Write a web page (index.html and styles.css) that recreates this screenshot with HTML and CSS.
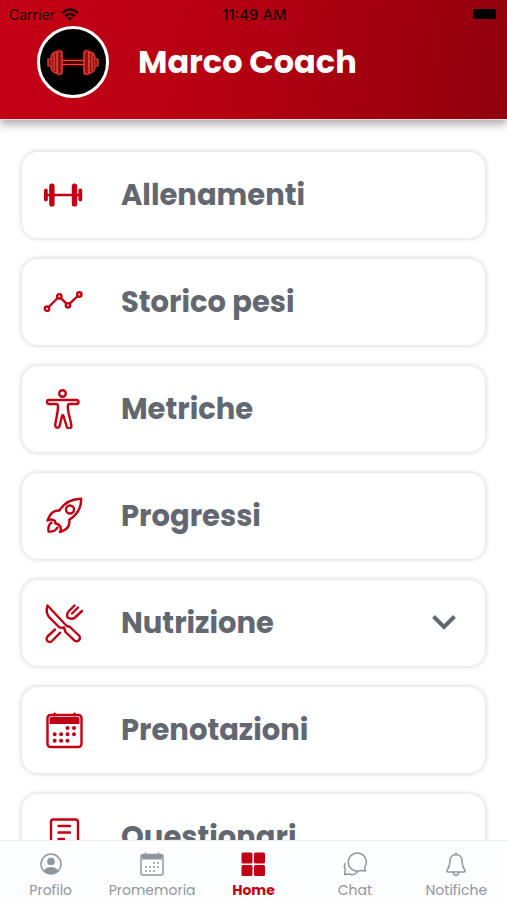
FILE: index.html
```html
<!DOCTYPE html>
<html lang="it">
<head>
<meta charset="utf-8">
<meta name="viewport" content="width=device-width, initial-scale=1">
<title>Marco Coach</title>
<link rel="stylesheet" href="styles.css">
</head>
<body>
<header class="header">
  <div class="status">
    <span class="carrier">Carrier
      <svg class="wifi" viewBox="0 0 18 13" aria-hidden="true"><g fill="none" stroke="currentColor" stroke-width="2.4"><path d="M1 5Q9-2 17 5"/><path d="M4 8.2Q9 3.8 14 8.2"/></g><path d="M6.2 10Q9 7.8 11.8 10L9 13Z" fill="currentColor"/></svg>
    </span>
    <time class="clock">11:49 AM</time>
    <svg class="battery" viewBox="0 0 28 12" aria-hidden="true"><rect x="1" y="1" width="23" height="10" rx="2"/><path d="M26 4q1.600 2 0 4z" opacity=".4"/></svg>
  </div>
  <div class="brand">
    <svg class="avatar" viewBox="0 0 72 72" aria-hidden="true">
      <circle cx="36" cy="36" r="34.500" fill="#000" stroke="#fff" stroke-width="3"/>
      <g fill="none" stroke="#c81414" stroke-width="4" opacity=".4"><path d="M25 34.500H47M25 38.500H47"/><rect x="19" y="25" width="5" height="23" rx="2"/><rect x="48" y="25" width="5" height="23" rx="2"/></g>
      <g fill="#8d1512" stroke="#f2443c" stroke-width="1.200"><path d="M25 34.500H47M25 38.500H47" fill="none"/><rect x="20" y="25" width="5" height="23" rx="2"/><rect x="47" y="25" width="5" height="23" rx="2"/><path d="M20 26Q15 26 14 31V42Q15 47 20 47ZM52 26Q57 26 58 31V42Q57 47 52 47Z"/><path d="M17 28V45M55 28V45M14 33H11V40H14M58 33H61V40H58"/></g>
    </svg>
    <h1 class="title">Marco Coach</h1>
  </div>
</header>

<main class="menu">
  <a class="card" href="#allenamenti">
    <svg class="icon" viewBox="0 0 40 40" aria-hidden="true"><path d="M2 20H38" stroke-width="2.400"/><g fill="currentColor" stroke="none"><rect x="1" y="13.500" width="3.800" height="13" rx="1.900"/><rect x="6.200" y="8.500" width="5.400" height="23" rx="2.600"/><rect x="28.800" y="8.500" width="5.400" height="23" rx="2.600"/><rect x="35.400" y="13.500" width="3.800" height="13" rx="1.900"/></g></svg>
    <span>Allenamenti</span>
  </a>
  <a class="card" href="#storico">
    <svg class="icon" viewBox="0 0 40 40" aria-hidden="true"><path d="M5.700 25L14.600 16M17.800 16.200L23.500 21.700M26.700 21.600L34.700 14"/><circle cx="4" cy="26.700" r="2.200"/><circle cx="16.300" cy="14.300" r="2.200"/><circle cx="25" cy="23.300" r="2.200"/><circle cx="36.300" cy="12.500" r="2.200"/></svg>
    <span>Storico pesi</span>
  </a>
  <a class="card" href="#metriche">
    <svg class="icon" viewBox="0 0 40 40" aria-hidden="true"><circle cx="19.500" cy="4.500" r="3.300"/><path d="M6 11H33.500A2 2 0 0 1 33.500 15H26.500Q24.800 15 24.800 17.500C24.800 25 28 31 28.300 36.500A2.300 2.300 0 0 1 23.700 37.500L20.500 27Q19.800 25.500 19 27L16.500 37.500A2.300 2.300 0 0 1 12.200 36.500C12.400 31 15 25 15 17.500Q15 15 13 15H6A2 2 0 0 1 6 11Z"/></svg>
    <span>Metriche</span>
  </a>
  <a class="card" href="#progressi">
    <svg class="icon" viewBox="0 0 40 40" aria-hidden="true"><path d="M38.200 2.800C29 2.800 22 6 16.300 14.500C10.500 14 7 17 4.500 24.500C7.500 22.800 10 23.500 12 25L12.500 27.500L15.500 28.500C18 30.500 18.500 33 17 36C24.500 34 27 29.500 26.300 23.800C35 18 38.500 11 38.200 2.800Z"/><circle cx="27" cy="13.500" r="4"/><path d="M8.500 26.500C5.500 28.500 5 31.500 5.500 35.500C9.500 36 12.500 35 14.500 31.500"/></svg>
    <span>Progressi</span>
  </a>
  <button class="card" type="button" aria-expanded="false">
    <svg class="icon" viewBox="0 0 40 40" aria-hidden="true"><path d="M4.500 2.500C2.500 8 4 12.500 8 16L16 24Q18 25.500 21 24.500L22.500 29L31 37.200A3 3 0 0 0 36 32.500L27 24L23.500 22.800Z"/><path d="M12 26.500L4.500 33.500A3 3 0 0 0 9 38L17 29.800M31.500 2.500L25.500 8.500Q23.500 10.500 24.500 14.500Q29 17 32 14.500L39 8M35 4.500L29 10.500"/></svg>
    <span>Nutrizione</span>
    <svg class="chevron" viewBox="0 0 24 24" aria-hidden="true"><path d="M1.500 5.500L12 16L22.500 5.500"/></svg>
  </button>
  <a class="card" href="#prenotazioni">
    <svg class="icon" viewBox="0 0 40 40" aria-hidden="true"><rect x="4.500" y="5" width="34" height="32" rx="3"/><path d="M6.500 8.500Q6.500 7 8 7H35Q36.500 7 36.500 8.500V14H6.500Z" fill="currentColor" stroke="none"/><path d="M11.500 4V5M31.500 4V5" stroke-width="3"/><path class="dots" d="M24.500 18H24.510M31 18H31.010M11.700 24.300H11.710M18.100 24.300H18.110M24.500 24.300H24.510M31 24.300H31.010M11.700 30.700H11.710M18.100 30.700H18.110M24.500 30.700H24.510"/></svg>
    <span>Prenotazioni</span>
  </a>
  <a class="card" href="#questionari">
    <svg class="icon" viewBox="0 0 40 40" aria-hidden="true"><path d="M8 38V5Q8 2.500 10.500 2.500H32.500Q35 2.500 35 5V38ZM15.500 9H27M15.500 15.500H27M15.500 22H21"/></svg>
    <span>Questionari</span>
  </a>
</main>

<nav class="tabs" aria-label="Principale">
  <a class="tab" href="#profilo">
    <svg viewBox="0 0 26 26" aria-hidden="true"><circle cx="13" cy="13" r="10"/><circle cx="13" cy="10.500" r="3.800" fill="currentColor" stroke="none"/><path d="M6 20Q7.500 16 13 16T20 20Q17 23 13 23T6 20Z" fill="currentColor" stroke="none"/></svg>
    <span>Profilo</span>
  </a>
  <a class="tab" href="#promemoria">
    <svg viewBox="0 0 26 26" aria-hidden="true"><rect x="2" y="3.500" width="22" height="20.500" rx="2"/><path d="M3 4H23V8.500H3Z" fill="currentColor" stroke="none"/><path d="M6.500 2V4M19.500 2V4"/><path class="dots-small" d="M15 12H15.010M19 12H19.010M7 16H7.010M11 16H11.010M15 16H15.010M19 16H19.010M7 20H7.010M11 20H11.010M15 20H15.010"/></svg>
    <span>Promemoria</span>
  </a>
  <a class="tab active" href="#home" aria-current="page">
    <svg viewBox="0 0 26 26" aria-hidden="true"><g fill="currentColor" stroke="none"><rect x="1.500" y="1.500" width="11" height="11" rx="1.500"/><rect x="14" y="1.500" width="11" height="11" rx="1.500"/><rect x="1.500" y="14" width="11" height="11" rx="1.500"/><rect x="14" y="14" width="11" height="11" rx="1.500"/></g></svg>
    <span>Home</span>
  </a>
  <a class="tab" href="#chat">
    <svg viewBox="0 0 26 26" aria-hidden="true"><path d="M23.500 20L22.500 16.500A9 9 0 1 0 18.500 19.500L23.500 20Z"/><path d="M3 12.500Q1.500 15.500 3.200 18.500L2.500 23.500L7 23Q11.500 25 15 21.500"/></svg>
    <span>Chat</span>
  </a>
  <a class="tab" href="#notifiche">
    <svg viewBox="0 0 26 26" aria-hidden="true"><path d="M13 2V4M13 3.500C9 3.500 7 6.500 7 10C7 15 5.500 17 4 19.500Q3.500 21 5 21H21Q22.500 21 22 19.500C20.500 17 19 15 19 10C19 6.500 17 3.500 13 3.500ZM10 21Q10.500 24.300 13 24.300T16 21"/></svg>
    <span>Notifiche</span>
  </a>
</nav>
</body>
</html>
```
FILE: styles.css
```css
* {
  box-sizing: border-box;
}

body {
  display: flex;
  flex-direction: column;
  height: 100vh;
  margin: 0;
  background: #fff;
  color: #636770;
  font-family: Poppins, Inter, "Open Sans", sans-serif;
}

a {
  color: inherit;
  text-decoration: none;
}

svg {
  flex: none;
}

.header {
  position: relative;
  flex: none;
  padding-bottom: 21px;
  border-bottom: 1px solid #f5dede;
  background: linear-gradient(100deg, #c40014 0%, #b80011 40%, #90000d 100%);
  box-shadow: 0 4px 9px rgba(0, 0, 0, 0.35);
}

.status {
  display: grid;
  grid-template-columns: 1fr auto 1fr;
  align-items: center;
  height: 26px;
  padding: 2px 7px 0 9px;
  color: #210004;
  font-family: Inter, sans-serif;
  font-size: 14px;
}

.carrier {
  display: flex;
  align-items: center;
  gap: 6px;
}

.wifi {
  width: 18px;
  height: 13px;
}

.clock {
  font-size: 15px;
  font-weight: 500;
}

.battery {
  justify-self: end;
  width: 28px;
  height: 12px;
}

.brand {
  display: flex;
  align-items: center;
  gap: 29px;
  padding-left: 37px;
}

.avatar {
  width: 72px;
  height: 72px;
}

.title {
  margin: 0;
  color: #fff;
  font-size: 32px;
  font-weight: 700;
  line-height: 40px;
}

.menu {
  display: flex;
  flex: 1;
  flex-direction: column;
  gap: 21px;
  min-height: 0;
  padding: 32px 22px 21px;
  overflow-y: auto;
  scrollbar-width: none;
}

.card {
  display: flex;
  flex: none;
  align-items: center;
  gap: 38px;
  width: 100%;
  height: 86px;
  padding: 0 29px 0 21px;
  border: 0;
  border-radius: 16px;
  background: #fff;
  box-shadow: 0 0 5px 1px rgba(0, 0, 0, 0.14);
  color: inherit;
  font: 700 29px/40px Poppins, Inter, "Open Sans", sans-serif;
  text-align: left;
}

.icon {
  width: 40px;
  height: 40px;
  fill: none;
  stroke: currentColor;
  stroke-width: 2.4;
  stroke-linecap: round;
  stroke-linejoin: round;
  color: #c20013;
}

.dots {
  stroke-width: 4;
}

.chevron {
  width: 24px;
  height: 24px;
  margin-left: auto;
  fill: none;
  stroke: currentColor;
  stroke-width: 4;
}

.tabs {
  display: grid;
  flex: none;
  grid-template-columns: repeat(5, 1fr);
  height: 60px;
  border-top: 1px solid #ececef;
  background: #fdfeff;
}

.tab {
  display: flex;
  flex-direction: column;
  align-items: center;
  gap: 3px;
  padding-top: 10px;
  color: #91959e;
  font-size: 14px;
  line-height: 20px;
}

.tab svg {
  width: 26px;
  height: 26px;
  fill: none;
  stroke: currentColor;
  stroke-width: 1.5;
  stroke-linecap: round;
  stroke-linejoin: round;
}

.tab .dots-small {
  stroke-width: 2;
}

.tab.active {
  color: #c20013;
  font-weight: 700;
}
```
